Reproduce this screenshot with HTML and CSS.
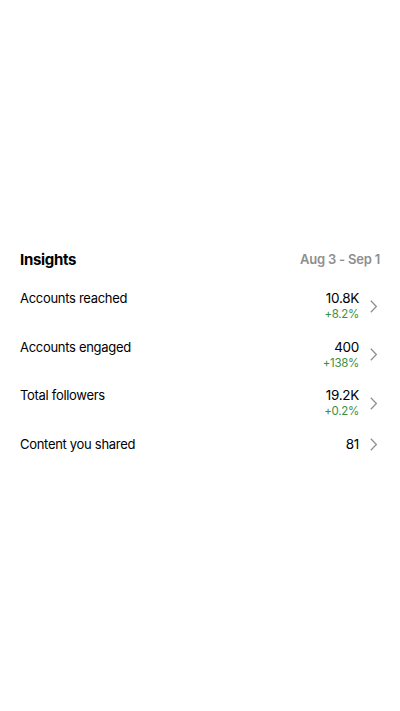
FILE: index.html
```html
<!DOCTYPE html>
<html lang="en">
<head>
    <meta charset="UTF-8">
    <meta name="viewport" content="width=device-width, initial-scale=1.0">
    <title>Insights</title>
    <link rel="stylesheet" href="styles.css">
</head>
<body>
    <section class="insights">
        <div class="insights-head">
            <h2>Insights</h2>
            <span class="range">Aug 3 - Sep 1</span>
        </div>
        <ul class="stats">
            <li class="stat">
                <span class="label">Accounts reached</span>
                <div class="figures">
                    <span class="value">10.8K</span>
                    <span class="delta">+8.2%</span>
                </div>
                <svg class="chevron" viewBox="0 0 7 13"><path d="M0.8 0.8l5.6 5.7-5.6 5.7"/></svg>
            </li>
            <li class="stat">
                <span class="label">Accounts engaged</span>
                <div class="figures">
                    <span class="value">400</span>
                    <span class="delta">+138%</span>
                </div>
                <svg class="chevron" viewBox="0 0 7 13"><path d="M0.8 0.8l5.6 5.7-5.6 5.7"/></svg>
            </li>
            <li class="stat">
                <span class="label">Total followers</span>
                <div class="figures">
                    <span class="value">19.2K</span>
                    <span class="delta">+0.2%</span>
                </div>
                <svg class="chevron" viewBox="0 0 7 13"><path d="M0.8 0.8l5.6 5.7-5.6 5.7"/></svg>
            </li>
            <li class="stat">
                <span class="label">Content you shared</span>
                <div class="figures">
                    <span class="value">81</span>
                </div>
                <svg class="chevron" viewBox="0 0 7 13"><path d="M0.8 0.8l5.6 5.7-5.6 5.7"/></svg>
            </li>
        </ul>
    </section>
</body>
</html>
```

FILE: styles.css
```css
body {
    margin: 0;
    background: #fff;
    font-family: Inter, "Liberation Sans", Arial, sans-serif;
    color: #000;
    letter-spacing: -0.3px;
}
.insights {
    padding: 249px 20px 0;
}
.insights-head {
    display: flex;
    justify-content: space-between;
    align-items: center;
    height: 20px;
    margin-bottom: 21px;
}
.insights-head h2 {
    margin: 0;
    font-size: 15px;
    font-weight: 700;
}
.range {
    font-size: 13px;
    font-weight: 600;
    color: #8e8e8e;
    letter-spacing: -0.2px;
}
.stats {
    list-style: none;
    margin: 0;
    padding: 0;
    display: flex;
    flex-direction: column;
    gap: 16.5px;
}
.stat {
    display: flex;
    align-items: center;
    min-height: 32px;
}
.stat:last-child {
    min-height: 17px;
}
.label {
    flex: 1;
    align-self: flex-start;
    font-size: 13px;
    line-height: 17px;
}
.figures {
    display: flex;
    flex-direction: column;
    align-items: flex-end;
    align-self: flex-start;
}
.value {
    font-size: 13.5px;
    line-height: 17px;
}
.delta {
    font-size: 11.5px;
    line-height: 15px;
    color: #3e8e41;
}
.chevron {
    width: 7px;
    height: 13px;
    margin-left: 11px;
    margin-right: 3px;
    fill: none;
    stroke: #8e8e8e;
    stroke-width: 1.3;
}
```
